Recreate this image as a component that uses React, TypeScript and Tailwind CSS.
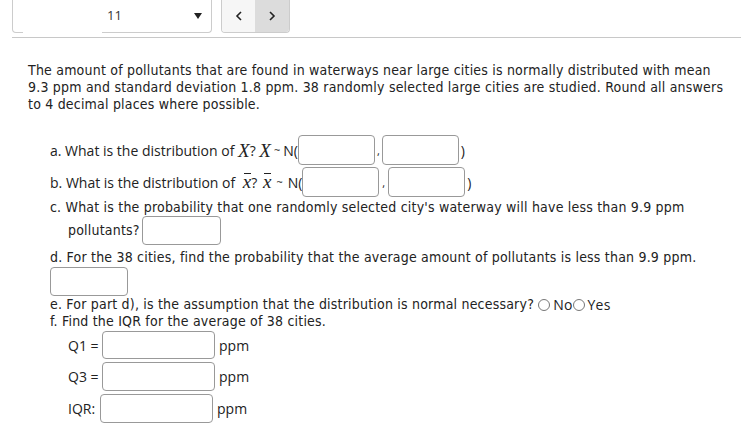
import React from "react";

const cond = { fontFamily: '"DejaVu Sans Condensed", "DejaVu Sans", sans-serif', letterSpacing: "0.2px" };
const ui = { fontFamily: '"Open Sans", "Noto Sans", sans-serif' };
const math = { fontFamily: '"Liberation Serif", "DejaVu Serif", serif' };

const Box = ({ w = "w-[78px]", h = "h-[30px]" }: { w?: string; h?: string }) => (
  <span className={`inline-block ${w} ${h} border border-[#999] rounded-[4px] bg-white align-middle`} />
);

const Radio = () => (
  <span className="inline-block w-[12px] h-[12px] rounded-full border border-[#777] bg-white align-middle" />
);

const XBar = () => (
  <span className="relative inline-block italic text-[19px] leading-none" style={math}>
    <span className="absolute left-[1px] right-0 top-[1px] border-t border-[#222]" />
    x
  </span>
);

export default function App() {
  return (
    <div className="w-[741px] h-[445px] bg-white text-[#222] overflow-hidden">
      {/* header */}
      <div className="flex items-start pl-[12px] gap-[9px]">
        <div className="relative w-[200px] h-[33px] border-x border-b border-[#ccc] rounded-b-[4px] flex items-center text-[13px]" style={ui}>
          <span className="absolute left-[10px] -bottom-[2px] w-[79px] h-[3px] bg-white" />
          <span className="ml-[94px] text-[#333]">11</span>
          <svg className="ml-auto mr-[9px]" width="8" height="6" viewBox="0 0 8 6">
            <path d="M0 0 L8 0 L4 6 Z" fill="#222" />
          </svg>
        </div>
        <div className="flex h-[33px] border-x border-b border-[#ccc] rounded-b-[4px] overflow-hidden">
          <div className="w-[33px] bg-[#f6f6f6] flex items-center justify-center">
            <svg width="8" height="10" viewBox="0 0 8 10"><path d="M6 1 L2 5 L6 9" fill="none" stroke="#222" strokeWidth="1.6" /></svg>
          </div>
          <div className="w-[34px] bg-[#dcdcdc] flex items-center justify-center">
            <svg width="8" height="10" viewBox="0 0 8 10"><path d="M2 1 L6 5 L2 9" fill="none" stroke="#222" strokeWidth="1.6" /></svg>
          </div>
        </div>
      </div>
      <div className="ml-[12px] mt-[4px] border-t border-[#c8c8c8]" />

      {/* problem text */}
      <p className="pl-[28px] pr-[8px] mt-[24px] text-[14px] leading-[17px] text-[#222]" style={cond}>
        The amount of pollutants that are found in waterways near large cities is normally distributed with mean 9.3 ppm and standard deviation 1.8 ppm. 38 randomly selected large cities are studied. Round all answers to 4 decimal places where possible.
      </p>

      <div className="pl-[50px] mt-[22px]">
        {/* a */}
        <div className="flex items-center h-[30px] text-[14px]" style={ui}>
          <span>a. What is the distribution of&nbsp;</span>
          <span className="italic text-[19px] leading-none" style={math}>X</span>
          <span>?&nbsp;</span>
          <span className="italic text-[19px] leading-none" style={math}>X</span>
          <span className="text-[11px] mx-[3px]">~</span>
          <span>N(</span>
          <Box w="w-[77px]" />
          <span className="mx-[2px] self-end mb-[6px] text-[11px]">,</span>
          <Box w="w-[77px]" />
          <span className="ml-[2px]">)</span>
        </div>
        {/* b */}
        <div className="flex items-center h-[30px] mt-[2px] text-[14px]" style={ui}>
          <span>b. What is the distribution of&nbsp;</span>
          <span className="ml-[4px]"><XBar /></span>
          <span>?&nbsp;</span>
          <span className="ml-[2px]"><XBar /></span>
          <span className="text-[11px] mx-[5px]">~</span>
          <span>N(</span>
          <Box w="w-[77px]" />
          <span className="mx-[3px] self-end mb-[6px] text-[11px]">,</span>
          <Box w="w-[77px]" />
          <span className="ml-[2px]">)</span>
        </div>
        {/* c */}
        <div className="mt-[2px] text-[14px]" style={cond}>
          <div className="leading-[17px]">c. What is the probability that one randomly selected city's waterway will have less than 9.9 ppm</div>
          <div className="flex items-center pl-[18px]">
            <span>pollutants?</span>
            <span className="ml-[2px]"><Box w="w-[79px]" h="h-[29px]" /></span>
          </div>
        </div>
        {/* d */}
        <div className="mt-[4px] text-[14px] leading-[17px]" style={cond}>
          d. For the 38 cities, find the probability that the average amount of pollutants is less than 9.9 ppm.
        </div>
        <div className="mt-[1px] h-[29px]"><Box w="w-[78px]" h="h-[29px]" /></div>
        {/* e */}
        <div className="flex items-center text-[14px] leading-[17px]" style={cond}>
          <span>e. For part d), is the assumption that the distribution is normal necessary?&nbsp;</span>
          <Radio />
          <span className="ml-[3px]" style={ui}>No</span>
          <Radio />
          <span className="ml-[3px]" style={ui}>Yes</span>
        </div>
        {/* f */}
        <div className="text-[14px] leading-[17px]" style={cond}>
          f. Find the IQR for the average of 38 cities.
        </div>
        <div className="pl-[18px] mt-[1px] flex flex-col gap-[3px] text-[14px]" style={ui}>
          <div className="flex items-center">
            <span className="w-[34px]">Q1 =</span>
            <Box w="w-[113px]" h="h-[28px]" />
            <span className="ml-[4px]">ppm</span>
          </div>
          <div className="flex items-center">
            <span className="w-[34px]">Q3 =</span>
            <Box w="w-[113px]" h="h-[29px]" />
            <span className="ml-[4px]">ppm</span>
          </div>
          <div className="flex items-center">
            <span className="w-[32px]">IQR:</span>
            <Box w="w-[113px]" h="h-[29px]" />
            <span className="ml-[4px]">ppm</span>
          </div>
        </div>
      </div>
    </div>
  );
}
